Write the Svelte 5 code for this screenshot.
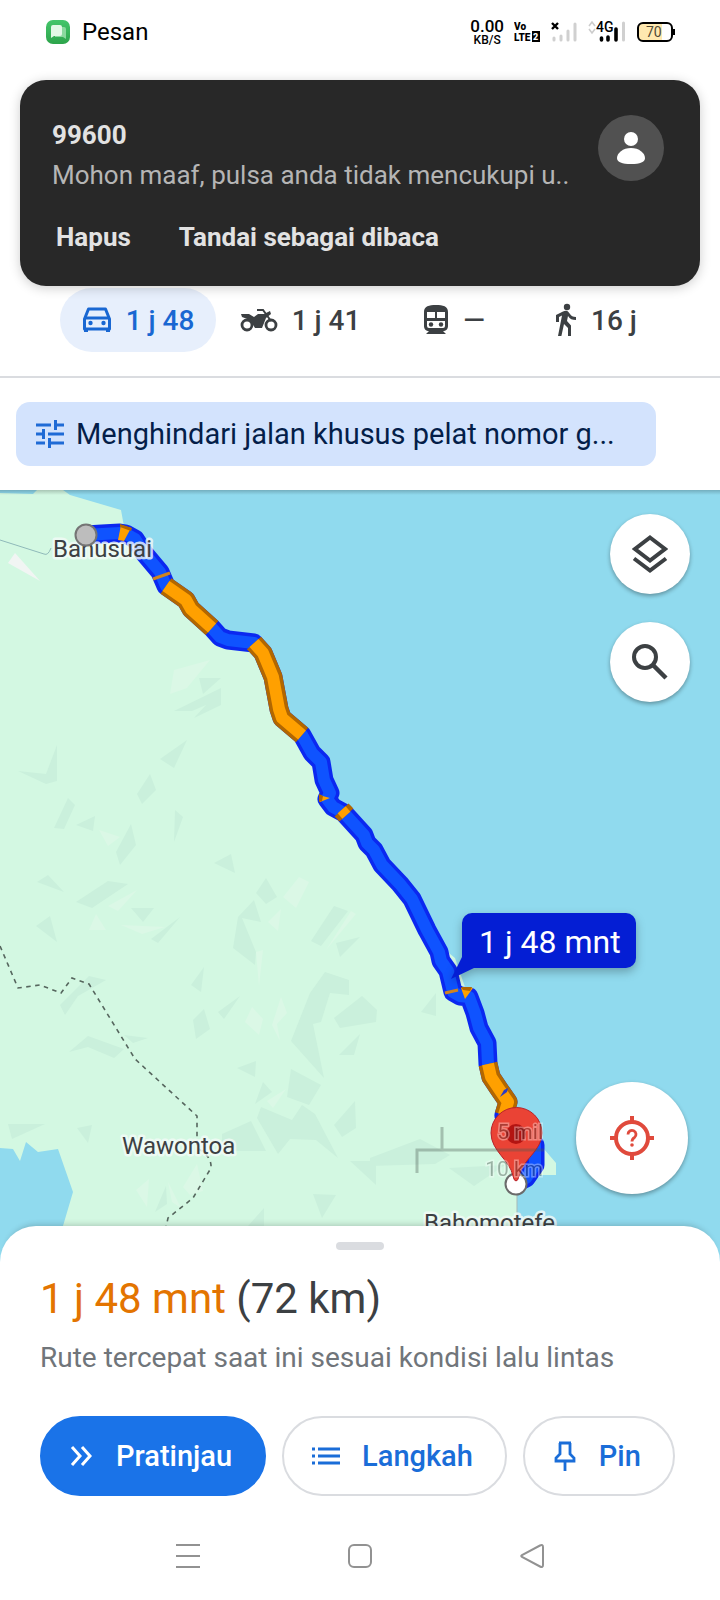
<script>
  const route = '86,535 102,534 120,533 126,534 135,539 144,553 160,572 166,586 186,600 191,609 212,628 220,637 228,640 254,643 263,653 273,677 279,709 282,718 302,735 312,753 321,762 324,780 330,793 327,799 333,807 344,813 364,835 367,843 374,850 382,865 400,884 412,899 427,930 439,952 441,961 448,971 453,992 460,996 469,997 475,1013 479,1028 487,1043 488,1064 491,1077 499,1089 508,1102 504,1115 525,1130 535,1145 535,1165 526,1178 516,1183';
  const orange = [
    '166,586 186,600 191,609 212,628',
    '254,643 263,653 273,677 279,709 282,718 302,735',
    '488,1064 491,1077 499,1089 508,1102 504,1115'
  ];
  const shades = [
    '199,678 221,678 203,694', '174,711 221,688 221,705 194,718 206,705 192,711', '160,759 187,740 174,768',
    '18,771 46,774 57,745 57,781 46,784', '137,794 150,774 156,790 142,804',
    '54,828 68,798 75,805 64,829', '76,825 95,816 93,831', '174,842 175,810 183,817',
    '131,824 136,845 120,865 116,852', '37,882 48,875 64,892', '76,902 108,881 128,884 92,908',
    '36,926 50,916 57,942', '131,908 154,908 143,922', '151,939 180,917 158,943', '214,863 231,854 235,873',
    '256,893 266,878 277,897 266,904', '238,917 254,900 261,922 242,918 256,952 255,965 233,948',
    '311,941 334,906 348,911 321,946', '336,943 360,937 340,957', '191,985 204,967 201,992',
    '60,1005 89,976 106,980 78,996 65,1015', '193,1020 204,1009 210,1029 196,1039', '218,1012 240,996 224,1019',
    '69,1052 88,1036 124,1049 114,1058 88,1047', '124,1035 148,1038 133,1043',
    '291,1041 310,993 325,972 349,980 349,995 330,993 321,1022 313,1024 324,1078', '334,1018 362,996 377,1010 376,1022 340,1028',
    '339,1055 360,1034 354,1055', '237,1068 256,1061 255,1077', '291,1069 321,1085 309,1105 287,1097',
    '255,1104 263,1082 272,1092', '261,1107 292,1120 302,1105 315,1114 338,1158 316,1140 290,1139 278,1154 257,1118',
    '8,1124 45,1124 12,1139', '77,1128 92,1125 88,1143', '222,1134 251,1121 266,1151 222,1151',
    '334,1125 355,1101 356,1128 342,1137', '350,1161 376,1161 376,1185', '313,1194 336,1195 322,1218', '248,1226 264,1208 264,1226',
    '155,1212 166,1186 167,1204', '421,1012 436,993 436,1016', '370,1158 420,1139 450,1155 435,1164 370,1166',
    '449,1168 505,1165 474,1186'
  ];
  const lights = [
    '174,670 210,660 187,688 170,694', '99,830 120,837 108,846', '108,906 137,890 118,911',
    '96,914 106,930 89,930', '121,925 165,927 142,934', '283,897 299,877 309,882 296,908', '268,922 281,909 278,931',
    '256,952 263,950 259,986', '326,950 351,911 356,914', '252,1007 263,1019 259,1035 245,1022',
    '272,1025 281,997 287,1013 277,1024 280,1041', '267,1101 286,1089 273,1108', '136,1190 149,1179 147,1207',
    '168,1182 181,1208 172,1202', '183,1187 197,1164 203,1191 190,1195'
  ];
</script>

<div class="screen">
  <header class="status">
    <div class="group app">
      <svg width="24" height="24" viewBox="0 0 24 24">
        <defs><linearGradient id="g" x2="0" y2="1"><stop stop-color="#45c66b" /><stop offset="1" stop-color="#2da44b" /></linearGradient></defs>
        <rect width="24" height="24" rx="7" fill="url(#g)" />
        <path d="M9 7h9a2 2 0 0 1 2 2v10l-3-2H9z" fill="#8bd99e" />
        <path d="M7 5h7a2 2 0 0 1 2 2v7a2 2 0 0 1-2 2H8l-3 2V7a2 2 0 0 1 2-2z" fill="#e3f8e6" />
      </svg>
      <span>Pesan</span>
    </div>
    <div class="group icons">
      <div class="speed"><b>0.00</b><small>KB/S</small></div>
      <svg class="volte" width="26" height="24" viewBox="0 0 26 24" aria-label="VoLTE 2">
        <text x="0" y="10">Vo</text><text x="0" y="21">LTE</text>
        <rect x="18" y="11" width="8" height="11" /><text class="two" x="19" y="20">2</text>
      </svg>
      <svg width="28" height="24" viewBox="0 0 28 24">
        <path d="M2 3l6 6M8 3l-6 6" stroke="#000" stroke-width="2.4" />
        <g stroke="#d0d0d0" stroke-width="3" stroke-linecap="round"><path d="M4 18v2M11 16v4M18 11v9M25 4v16" /></g>
      </svg>
      <svg class="fourg" width="38" height="24" viewBox="0 0 38 24">
        <path d="M1 6l3-4 3 4M1 9l3 4 3-4" fill="none" stroke="#ccc" stroke-width="1.6" />
        <text x="8" y="12">4G</text>
        <path d="M13.500 18v2M20 17v3M28 9v11" stroke="#000" stroke-width="3.600" stroke-linecap="round" />
        <path d="M35.500 3v17" stroke="#d0d0d0" stroke-width="3" stroke-linecap="round" />
      </svg>
      <svg class="battery" width="40" height="24" viewBox="0 0 40 24">
        <rect x="2" y="3" width="34" height="18" rx="5" fill="#fff" />
        <path d="M7 3h19v18H7a5 5 0 0 1-5-5V8a5 5 0 0 1 5-5z" fill="#ffe9b0" />
        <rect x="2" y="3" width="34" height="18" rx="5" fill="none" stroke="#000" stroke-width="2" />
        <path d="M38 9v6" stroke="#000" stroke-width="2" /><text x="10" y="17">70</text>
      </svg>
    </div>
  </header>

  <section class="notice">
    <div class="message">
      <div class="copy"><strong>99600</strong><p>Mohon maaf, pulsa anda tidak mencukupi u..</p></div>
      <svg width="66" height="66" viewBox="0 0 66 66"><circle cx="33" cy="33" r="33" fill="#515151" /><circle cx="33" cy="24" r="7" fill="#fff" /><path d="M33 33c8 0 14 5 14 10 0 4-5 6-14 6s-14-2-14-6c0-5 6-10 14-10z" fill="#fff" /></svg>
    </div>
    <div class="actions"><button>Hapus</button><button>Tandai sebagai dibaca</button></div>
  </section>

  <nav class="modes">
    <button class="active">
      <svg width="30" height="30" viewBox="0 0 30 30" fill="none" stroke="currentColor" stroke-width="3"><path d="M2.500 14L6.500 4h17l4 10v10h-25z" stroke-linejoin="round" /><path d="M3 13h24" /><path d="M4 23v4M26 23v4" stroke-width="4" /><circle cx="8.500" cy="18" r="2.200" fill="currentColor" stroke="none" /><circle cx="21.500" cy="18" r="2.200" fill="currentColor" stroke="none" /></svg>
      <span>1 j 48</span>
    </button>
    <button>
      <svg width="38" height="26" viewBox="0 0 38 26" fill="none" stroke="currentColor" stroke-width="2.800"><circle cx="7" cy="18" r="5" /><circle cx="31" cy="18" r="5" /><path d="M1 7h8l5 3 4-3h6l6-3 1 3-5 4-4 10h-7l-5-8-8-3z" fill="currentColor" stroke="none" /><path d="M17 3h6l8 11" stroke-width="2" /></svg>
      <span>1 j 41</span>
    </button>
    <button>
      <svg width="26" height="32" viewBox="0 0 26 32"><path d="M1 8c0-6 5-7 12-7s12 1 12 7v14c0 3-2 5-5 5l3 3H3l3-3c-3 0-5-2-5-5z" fill="currentColor" /><path d="M4 8h8v6H4zM14 8h8v6h-8zM4 17h18v5q0 2-2 2H6q-2 0-2-2z" fill="#fff" /><circle cx="8" cy="20.500" r="2.200" fill="currentColor" /><circle cx="18" cy="20.500" r="2.200" fill="currentColor" /></svg>
      <span>—</span>
    </button>
    <button>
      <svg width="22" height="34" viewBox="0 0 22 34"><circle cx="12" cy="4" r="3.200" fill="currentColor" /><path d="M8 8.500L1 12v7h3v-5l3-1.500L3 33h3.400L9 21l4 4v8h3V22.500L12 18l1-5c2 3 4 4 8 4v-3c-3 0-5-1-6-3l-2-2.500C12 7.500 10 7.500 8 8.500z" fill="currentColor" /></svg>
      <span>16 j</span>
    </button>
  </nav>

  <div class="filters">
    <button>
      <svg width="28" height="28" viewBox="0 0 28 28" stroke="currentColor" stroke-width="3"><path d="M0 5h15M18 5h10M19.500 0v10M0 14h6M12 14h16M7.500 9v10M0 23h9M13 23h15M13.500 18v10" /></svg>
      <span>Menghindari jalan khusus pelat nomor g...</span>
    </button>
  </div>

  <main class="map">
    <svg class="canvas" viewBox="0 490 720 780" preserveAspectRatio="xMidYMin slice">
      <rect y="490" width="720" height="780" fill="#90daee" />
      <path fill="#d3f8e2" d="M0 493L33 494L37 490H63L70 495L121 510L125 532L160 572L212 628L254 643L279 709L302 735L330 793L400 884L439 945L455 958L466 990L475 1013L488 1064L508 1100L538 1142L556 1163V1175H517V1270H0z" />
      <path fill="#90daee" d="M0 1148L13 1149L20 1161L26 1142L38 1152L58 1149L73 1192L50 1270H0zM361 997L365 1021L360 1024z" />
      {#each shades as points}<polygon {points} fill="#caf0dc" />{/each}
      {#each lights as points}<polygon {points} fill="#dbf8e6" />{/each}
      <path d="M8 563L15 553L40 581z" fill="#f1f5f3" />
      <path d="M0 540L44 554Q48 556 51 548" fill="none" stroke="#8fb9b9" />
      <path d="M0 946L18 988L40 985L61 993L72 978L89 984L135 1059L197 1116V1148Q212 1156 211 1168L193 1198L168 1218L165 1232" fill="none" stroke="#56665e" stroke-width="1.600" stroke-dasharray="4.500 4.500" />
      <path d="M517 1190V1240" stroke="#a6b9b7" />

      <polyline class="casing blue" points={route} />
      <polyline class="line blue" points={route} />
      {#each orange as points}<polyline class="casing orange" {points} /><polyline class="line orange" {points} />{/each}
      <path d="M121 525L131 528L124 541L118 540z" fill="#ffa000" /><path d="M120 524L132 528L131 531L120 527z" fill="#b26700" />
      <path d="M153 579L170 573" stroke="#d08420" stroke-width="3" />
      <path d="M319 795L330 798L320 802z" fill="#ffa000" /><path d="M319 794L323 796L322 801L319 802z" fill="#b26700" />
      <path d="M337 819L351 806" stroke="#b26700" stroke-width="7" /><path d="M340 816L348 809" stroke="#ffa000" stroke-width="7" />
      <path d="M445 993L458 990" stroke="#d08420" stroke-width="3" /><path d="M461 988L473 988L465 999z" fill="#ffa000" /><path d="M461 987L472 987L470 991L463 990z" fill="#b26700" />
      <path d="M500 1097L504 1090L508 1088L507 1092z" fill="#293bc6" />

      <text class="place" x="53" y="557">Bahusuai</text>
      <text class="place" x="122" y="1154">Wawontoa</text>
      <text class="place" x="424" y="1231">Bahomotefe</text>
      <circle cx="86" cy="535" r="10.500" fill="#bdbdbd" stroke="#757575" stroke-width="2" />

      <circle cx="516" cy="1184" r="10.500" fill="#fff" stroke="#6b6b6b" stroke-width="2" />
      <path d="M516 1181q-2 0-3-5c-3-16-22-25-22-43a25.500 25.500 0 0 1 51 0c0 18-20 27-23 43q-1 5-3 5z" fill="#ea4335" stroke="#b7222a" />
      <circle cx="516" cy="1134" r="10" fill="#b31412" />
      <g class="scale"><path d="M417 1173V1150H544M442 1150V1127" /><text x="543" y="1139">5 mil</text><text x="543" y="1176">10 km</text></g>

      <path class="bubble" d="M472 913H626a10 10 0 0 1 10 10V958a10 10 0 0 1-10 10H474L451 979L462 957V923a10 10 0 0 1 10-10z" />
      <text class="time" x="479" y="953">1 j 48 mnt</text>
    </svg>

    <div class="tools">
      <button class="round" aria-label="Lapisan"><svg width="36" height="40" viewBox="0 0 36 40" fill="none" stroke="currentColor" stroke-width="4"><path d="M18 3.500L33 15L18 26.500L3 15z" /><path d="M2 24.500L18 36.500L34 24.500" /></svg></button>
      <button class="round" aria-label="Telusuri"><svg width="36" height="36" viewBox="0 0 36 36" fill="none" stroke="currentColor" stroke-width="4"><circle cx="13" cy="13" r="11" /><path d="M21 21l13 13" stroke-width="4.500" /></svg></button>
    </div>
    <button class="round locate" aria-label="Lokasi saya"><svg width="44" height="44" viewBox="0 0 44 44" fill="none" stroke="#e04a3c" stroke-width="4"><circle cx="22" cy="22" r="16" /><path d="M22 0v6M22 38v6M0 22h6M38 22h6" /><path d="M18 18.500a4 4 0 1 1 6.500 3Q22 23 22 25.500" stroke-width="2.800" /><circle cx="22" cy="29" r="1.800" fill="#e04a3c" stroke="none" /></svg></button>
  </main>

  <section class="sheet">
    <div class="handle"></div>
    <h1><span>1 j 48 mnt</span> (72 km)</h1>
    <p>Rute tercepat saat ini sesuai kondisi lalu lintas</p>
    <div class="buttons">
      <button class="primary"><svg width="24" height="24" viewBox="0 0 24 24" fill="none" stroke="currentColor" stroke-width="3"><path d="M2 3l8 9-8 9M12 3l8 9-8 9" /></svg><span>Pratinjau</span></button>
      <button><svg width="28" height="24" viewBox="0 0 28 24" stroke="currentColor" stroke-width="3"><path d="M0 5h3M6 5h22M0 12h3M6 12h22M0 19h3M6 19h22" /></svg><span>Langkah</span></button>
      <button><svg width="24" height="30" viewBox="0 0 24 30" fill="none" stroke="currentColor" stroke-width="2.800"><path d="M6 2h12M7 2v11l-4 4v3h18v-3l-4-4V2" /><path d="M12 20v10" /></svg><span>Pin</span></button>
    </div>
  </section>

  <nav class="system">
    <button aria-label="Terbaru"><svg width="26" height="26" viewBox="0 0 26 26"><path d="M1 2h24M1 13h24M1 24h24" /></svg></button>
    <button aria-label="Beranda"><svg width="26" height="26" viewBox="0 0 26 26"><rect x="2" y="2" width="22" height="22" rx="5" /></svg></button>
    <button aria-label="Kembali"><svg width="26" height="26" viewBox="0 0 26 26"><path d="M21 2.500L3 12Q1.500 13 3 14L21 23.500Q24 25 24 22V4Q24 1 21 2.500z" /></svg></button>
  </nav>
</div>

<style>
  :global(body) { margin: 0; background: #fff; }
  .screen { min-height: 100vh; display: flex; flex-direction: column; background: #fff; color: #3c4043; font-family: Roboto, "Noto Sans", sans-serif; }
  button { font: inherit; color: inherit; border: 0; padding: 0; background: none; display: flex; align-items: center; cursor: pointer; white-space: nowrap; }
  svg { flex: none; display: block; }

  .status { box-sizing: border-box; height: 80px; padding: 0 44px 16px 46px; display: flex; align-items: center; justify-content: space-between; color: #000; }
  .group { display: flex; align-items: center; gap: 12px; }
  .icons { gap: 10px; }
  .app { font-size: 24px; }
  .speed { display: flex; flex-direction: column; align-items: center; }
  .speed b { font-size: 17px; line-height: 16px; font-weight: 500; }
  .speed small { font-size: 12px; line-height: 12px; font-weight: 500; }
  .volte text { font: 900 10px Roboto, sans-serif; }
  .volte .two { font-size: 9px; fill: #fff; }
  .fourg text { font: 500 14px Roboto, sans-serif; }
  .battery text { font: 14px Roboto, sans-serif; fill: #4f4936; }

  .notice { position: relative; z-index: 1; box-sizing: border-box; margin: 0 20px; height: 206px; padding: 35px 36px 0 32px; border-radius: 26px; background: #282828; color: #e2e2e2; font-size: 26px; line-height: 40px; box-shadow: 0 2px 12px #0003; }
  .message { display: flex; align-items: flex-start; justify-content: space-between; gap: 24px; }
  .copy { min-width: 0; }
  .notice strong { display: block; font-weight: 700; }
  .notice p { margin: 0; color: #b5b5b5; overflow: hidden; white-space: nowrap; }
  .actions { display: flex; gap: 48px; padding: 22px 0 0 4px; line-height: 40px; }
  .actions button { font-weight: 700; }

  .modes { padding: 2px 0 24px 60px; display: grid; grid-template-columns: 156fr 168fr 140fr 144fr 52fr; border-bottom: 2px solid #dadce0; font-size: 28px; font-weight: 500; }
  .modes button { height: 64px; gap: 14px; justify-content: center; border-radius: 32px; }
  .modes .active { background: #e7effc; color: #1967d2; }

  .filters { padding: 24px 64px 24px 16px; }
  .filters button { box-sizing: border-box; width: 100%; height: 64px; padding: 0 20px; gap: 12px; border-radius: 14px; background: #d3e3fd; color: #1f6bd6; font-size: 29px; }
  .filters span { color: #041e49; overflow: hidden; text-overflow: ellipsis; }

  .map { position: relative; flex: 1 0 780px; overflow: hidden; background: #90daee; }
  .canvas { position: absolute; inset: 0; width: 100%; height: 100%; }
  .map::after { content: ""; position: absolute; inset: 0 0 auto; height: 5px; background: linear-gradient(#0003, #0000); }
  polyline { fill: none; stroke-linejoin: round; }
  .casing { stroke-width: 19px; }
  .line { stroke-width: 12px; }
  .casing.blue { stroke: #0b28f0; }
  .line.blue { stroke: #0f53ff; }
  .casing.orange { stroke: #b26700; }
  .line.orange { stroke: #ffa000; }
  .place { font-size: 24px; fill: #3c4043; stroke: #f4fbf8cc; stroke-width: 5px; stroke-linejoin: round; paint-order: stroke; }
  .scale { opacity: .35; font-size: 21px; }
  .scale path { fill: none; stroke: #4b5b53; stroke-width: 3px; }
  .scale text { text-anchor: end; fill: #333; stroke: #fff; stroke-width: 3px; paint-order: stroke; }
  .bubble { fill: #041ed4; filter: drop-shadow(0 4px 5px #0004); }
  .time { font-size: 32px; fill: #fff; }
  .tools { position: absolute; top: 24px; right: 30px; display: grid; gap: 28px; }
  .round { width: 80px; height: 80px; justify-content: center; border-radius: 50%; background: #fff; box-shadow: 0 2px 4px #0005; }
  .locate { position: absolute; right: 32px; bottom: 76px; width: 112px; height: 112px; }

  .sheet { position: relative; margin-top: -44px; padding: 16px 40px 20px; border-radius: 36px 36px 0 0; background: #fff; box-shadow: 0 -7px 6px -6px #0003; }
  .handle { width: 48px; height: 8px; margin: 0 auto; border-radius: 4px; background: #dadce0; }
  h1 { margin: 22px 0 0; font-size: 42px; line-height: 54px; font-weight: 400; }
  h1 span { color: #e37400; }
  .sheet p { margin: 14px 0 0; font-size: 28px; line-height: 36px; color: #70757a; }
  .buttons { margin-top: 40px; display: flex; gap: 16px; font-size: 29px; font-weight: 500; }
  .buttons button { box-sizing: border-box; height: 80px; padding: 0 32px 0 28px; gap: 22px; border: 2px solid #dadce0; border-radius: 40px; color: #1a6dd8; }
  .buttons .primary { background: #1a73e8; border-color: #1a73e8; color: #fff; }

  .system { padding: 0 102px; height: 84px; display: flex; }
  .system button { flex: 1; height: 80px; justify-content: center; }
  .system svg { fill: none; stroke: #929292; stroke-width: 2px; }
</style>
